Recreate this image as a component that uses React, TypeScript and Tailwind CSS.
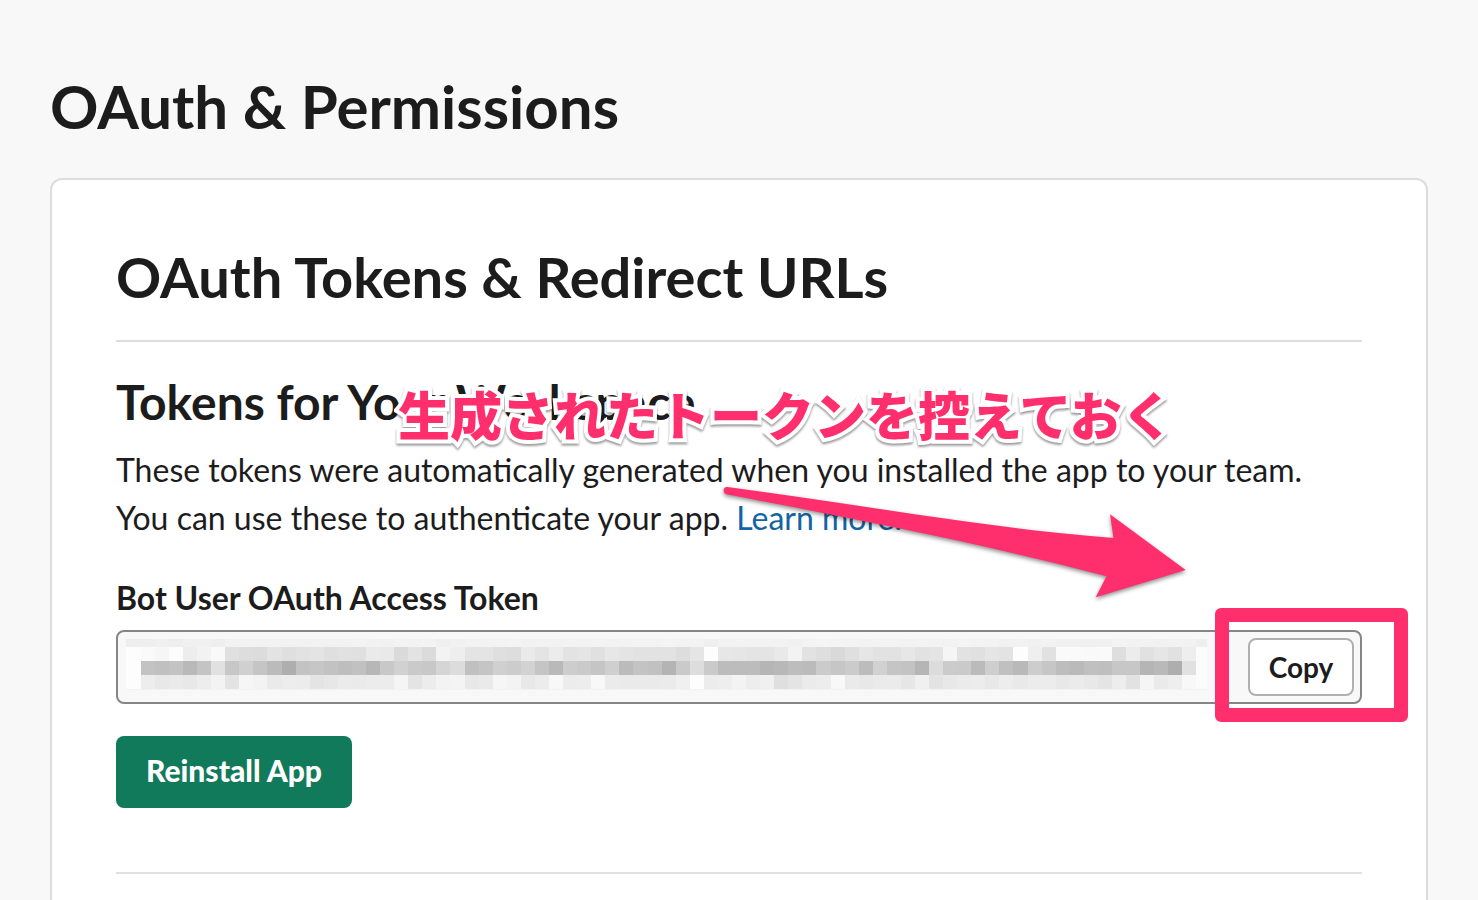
import React from "react";

const CELL = 14.076;

const mosaicRows: { y: number; height: number; shades: string }[] = [
  {
    y: 0,
    height: 8,
    shades:
      "ee ee f0 ee f0 f0 ee f2 f2 f2 f2 f2 f2 f2 f2 f2 f3 f2 f1 f3 f2 f3 ef f1 f2 f3 f3 f4 f2 f2 f2 f3 f3 f3 f2 f3 f3 f3 f4 f3 f3 ef f3 f3 f3 f3 f3 f1 f3 f5 f4 f3 f2 f3 f3 f2 f3 f3 f2 f4 f3 f3 f1 f2 f1 f2 f0 f0 f0 f0 f3 f2 f2 f1 f2 f2 ef",
  },
  {
    y: 8,
    height: 14,
    shades:
      "fd fa f6 fc ed f2 f9 e0 dd dc e3 df e2 e4 df e1 e0 ea e9 da e3 db f3 ee e4 e4 df dd ea e4 ec e3 e5 e0 e7 e4 e2 e2 e2 dd e5 fd e7 e6 e4 e4 e9 f3 e2 de d9 df e6 e2 e2 e7 e2 e4 f5 e2 e0 e5 e3 fd ef e1 fa fa f9 fa de ec e1 e6 e1 ee fb",
  },
  {
    y: 22,
    height: 14,
    shades:
      "fd c3 c0 c3 b9 c4 e1 c7 d0 c5 bb ae c3 c6 c2 be c1 b7 c8 d1 ca c8 d5 dc c0 c5 d0 cc d2 c5 b9 cd ca c5 cf bb c3 c1 b4 ca dd ca bc bc bc b5 b8 bd bb cb c6 cb bc d1 c5 c3 b5 dc cb ca bb ce c0 b9 cd c6 bd ba c0 bf c7 c7 b5 b9 ae e1 fb",
  },
  {
    y: 36,
    height: 14,
    shades:
      "fd ed e8 ea e8 ed f3 e3 f6 f3 ea ed ec e4 e7 eb ea ec ec f5 e4 ec f3 f4 e8 ea f6 f3 e8 ec f8 ec ed f8 eb ea ea ea eb f0 fd ec ee f3 ed f0 df e4 eb ed f8 ea e8 ea eb e6 f0 e3 e8 eb ec e8 ed e9 ec ec e8 eb e8 e4 ed e2 f5 ea ee f8 fb",
  },
];

function TokenMosaic() {
  return (
    <svg
      className="pointer-events-none col-start-1 row-start-1 self-start"
      width="1082"
      height="51"
      viewBox="0 0 1082 51"
      shapeRendering="crispEdges"
      aria-hidden="true"
    >
      <rect width="1081" height="51" fill="#f2f2f2" />
      {mosaicRows.map((row) =>
        row.shades.split(" ").map((shade, i) => {
          const start = i === 0 ? 0 : Math.round(i * CELL + 0.7);
          const end = Math.min(1081, Math.round((i + 1) * CELL + 0.7));
          return (
            <rect
              key={`${row.y}-${i}`}
              x={start}
              y={row.y}
              width={end - start}
              height={row.height}
              fill={`#${shade}${shade}${shade}`}
            />
          );
        }),
      )}
    </svg>
  );
}

function Arrow() {
  return (
    <svg
      className="pointer-events-none absolute left-[600px] top-[290px] drop-shadow-[0_2px_2px_rgba(0,0,0,0.45)]"
      width="480"
      height="125"
      viewBox="716 480 480 125"
      aria-hidden="true"
    >
      <path
        d="M727.5 487 C 850 503 985 528 1113.5 538 L 1110 514.3 L 1185.7 570 L 1095.7 597.3 L 1106.5 576.3 C 980 543 860 520 726.5 494.3 C 722 493 723 486.3 727.5 487 Z"
        fill="#ff2f6d"
      />
    </svg>
  );
}

export default function App() {
  return (
    <div className="flex h-screen min-h-[900px] flex-col overflow-hidden bg-[#f8f8f8] px-[50px] pt-[66px] font-['Lato','Noto_Sans_CJK_JP',sans-serif] text-[#1d1c1d]">
      <h1 className="mb-8 text-[60px] font-bold leading-[80px]">OAuth &amp; Permissions</h1>
      <main className="flex-1 rounded-t-xl border-2 border-b-0 border-[#dddddd] bg-white px-16 pt-[60px]">
        <div className="relative -mt-[50px] pt-[50px]">
          <h2 className="border-b-2 border-[#dddddd] pb-[26px] text-[56px] font-bold leading-[74px]">
            OAuth Tokens &amp; Redirect URLs
          </h2>
          <h3 className="mt-[30px] text-[48px] font-bold leading-[60px]">
            Tokens for Your Workspace
          </h3>
          <p className="mt-[14px] text-[32px] leading-[48px]">
            These tokens were automatically generated when you installed the app to your team.
            <br />
            You can use these to authenticate your app.{" "}
            <a href="#learn-more" className="text-[#1264a3]">
              Learn more.
            </a>
          </p>
          <label htmlFor="bot-token" className="mt-8 block text-[32px] font-bold leading-[48px]">
            Bot User OAuth Access Token
          </label>
          <div className="relative mt-2 flex h-[74px] rounded-lg border-2 border-[#868686] bg-[#f8f8f8] p-[6px]">
            <div className="grid min-w-0 flex-1 overflow-hidden pl-[2px] pt-px">
              <input
                id="bot-token"
                type="text"
                readOnly
                className="col-start-1 row-start-1 h-full w-full min-w-0 bg-transparent outline-none"
              />
              <TokenMosaic />
            </div>
            <button
              type="button"
              className="w-[106px] rounded-lg border-2 border-[#b0b0b0] bg-white text-[28px] font-bold leading-9"
            >
              Copy
            </button>
            <div className="pointer-events-none absolute -right-12 -top-6 h-[114px] w-[193px] rounded-md border-14 border-[#ff2f6d]" />
          </div>
          <button
            type="button"
            className="mt-8 block h-[72px] w-[236px] rounded-lg bg-[#107a5b] pb-1 text-[30px] font-black leading-10 text-white"
          >
            Reinstall App
          </button>
          <hr className="mt-16 border-t-2 border-[#e1e1e1]" />
          <Arrow />
          <p className="pointer-events-none absolute left-[282px] top-[186px] whitespace-nowrap font-['Noto_Sans_CJK_JP',sans-serif] text-[52px] font-black leading-[76px] text-[#ff2f6d] drop-shadow-[0_2px_1px_rgba(0,0,0,0.4)] [-webkit-text-stroke:8px_white] [paint-order:stroke_fill]">
            生成されたトークンを控えておく
          </p>
        </div>
      </main>
    </div>
  );
}
